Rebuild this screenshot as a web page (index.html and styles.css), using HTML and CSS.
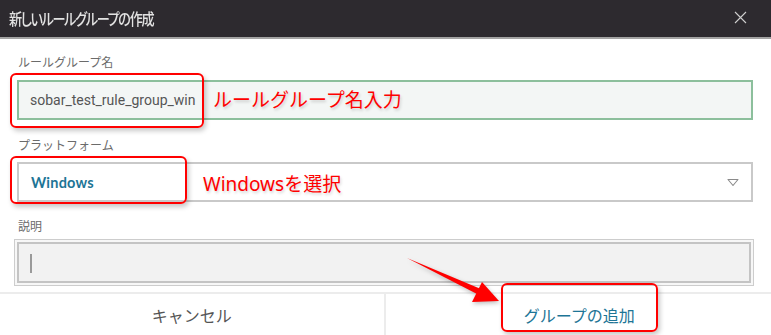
FILE: index.html
```html
<!DOCTYPE html>
<html lang="ja">
<head>
<meta charset="utf-8">
<link rel="stylesheet" href="styles.css">
</head>
<body>
<div class="dialog">
  <div class="header">
    <span class="title">新しいルールグループの作成</span>
    <svg class="close" width="13" height="13" viewBox="0 0 13 13"><path d="M1 1L12 12M12 1L1 12" stroke="#cfcfcf" stroke-width="1.1" fill="none"/></svg>
  </div>
  <div class="form">
    <div class="label">ルールグループ名</div>
    <div class="input name-input">sobar_test_rule_group_win</div>
    <div class="label l2">プラットフォーム</div>
    <div class="input select">
      <span class="win">Windows</span>
      <svg width="12" height="9" viewBox="0 0 12 9"><path d="M1 1.5H11L6 7.5Z" fill="none" stroke="#8a8a8a" stroke-width="1.1" stroke-linejoin="round"/></svg>
    </div>
    <div class="label l3">説明</div>
    <div class="desc-outer"><div class="desc-inner"><span class="caret"></span></div></div>
  </div>
  <div class="footer">
    <div class="btn cancel">キャンセル</div>
    <div class="btn add">グループの追加</div>
  </div>

  <div class="mark m1"></div>
  <div class="mark m2"></div>
  <div class="mark m3"></div>
  <div class="note n1">ルールグループ名入力</div>
  <div class="note n2">Windowsを選択</div>
  <svg class="arrow" width="771" height="335" viewBox="0 0 771 335">
    <path d="M407 258 L482 289.5 L478 294.5 Z" fill="#f00"/>
    <path d="M499 301 L482 282 L472 302 Z" fill="#f00"/>
  </svg>
</div>
</body>
</html>
```

FILE: styles.css
```css
* { box-sizing: border-box; }
html, body { margin: 0; padding: 0; background: #fff; }
body { font-family: "Noto Sans CJK JP", "Noto Sans", sans-serif; }
.dialog { position: relative; width: 771px; height: 335px; overflow: hidden; background: #fff; }
.header {
  height: 39px;
  background: #2d2a2f;
  border-bottom: 2px solid #a3a3a3;
  display: flex;
  align-items: center;
  justify-content: space-between;
  padding: 0 24px 0 9px;
}
.title {
  display: inline-block;
  color: #e2e2e2;
  font-size: 16px;
  font-weight: 500;
  font-feature-settings: "palt";
  letter-spacing: -1.6px;
  line-height: 1;
  margin-top: -2px;
  transform: scaleX(0.82);
  transform-origin: left center;
  white-space: nowrap;
}
.close { margin-top: -2px; }
.form { padding: 15px 18px 0 17px; display: flex; flex-direction: column; }
.label {
  font-size: 12px;
  line-height: 16px;
  color: #6b6b6b;
  padding-left: 1px;
}
.l2 { margin-top: 17px; }
.l3 { margin-top: 16px; }
.input {
  height: 40px;
  display: flex;
  align-items: center;
}
.name-input {
  margin-top: 10px;
  background: #f3f6f5;
  border: 2px solid #8cbf9c;
  padding-left: 11px;
  font-family: Roboto, "Noto Sans", sans-serif;
  font-size: 14px;
  color: #555;
}
.select {
  margin-top: 9px;
  background: #fff;
  border: 2px solid #c9c9c9;
  padding: 0 12px 0 12px;
  justify-content: space-between;
}
.win {
  font-family: Lato, "Noto Sans", sans-serif;
  font-weight: 700;
  font-size: 14.5px;
  color: #1d7596;
  letter-spacing: 0.2px;
}
.desc-outer {
  margin: 5px -1px 0 -3px;
  height: 47px;
  border: 1px solid #cdcdcd;
  background: #f7f7f7;
  padding: 2px;
}
.desc-inner {
  height: 100%;
  background: #f2f2f2;
  border: 2px solid #c4c4c4;
  padding: 10px 0 0 11px;
}
.caret { display: block; width: 2px; height: 19px; background: #9a9a9a; }
.footer {
  position: absolute;
  left: 0; right: 0; bottom: 0;
  height: 43px;
  border-top: 2px solid #ececec;
  display: flex;
}
.btn {
  flex: 1;
  display: flex;
  align-items: center;
  justify-content: center;
  font-size: 16px;
  padding-top: 1px;
}
.cancel { color: #555; border-right: 2px solid #ececec; }
.add { color: #1d7596; padding-left: 2px; }
.mark {
  position: absolute;
  border: 2px solid #f00;
  border-radius: 6px;
  box-shadow: 2px 3px 5px rgba(0,0,0,0.22);
}
.m1 { left: 10px; top: 73px; width: 194px; height: 55px; }
.m2 { left: 10px; top: 156px; width: 177px; height: 48px; }
.m3 { left: 501px; top: 283px; width: 157px; height: 49px; }
.note {
  position: absolute;
  color: #f00;
  font-size: 19px;
  line-height: 1;
  text-shadow: 1px 2px 3px rgba(0,0,0,0.18);
  white-space: nowrap;
}
.n1 { left: 213px; top: 89px; }
.n2 { left: 203px; top: 175px; font-family: "Noto Sans", "Noto Sans CJK JP", sans-serif; }
.arrow { position: absolute; left: 0; top: 0; filter: drop-shadow(1px 2px 2px rgba(0,0,0,0.25)); }
```
